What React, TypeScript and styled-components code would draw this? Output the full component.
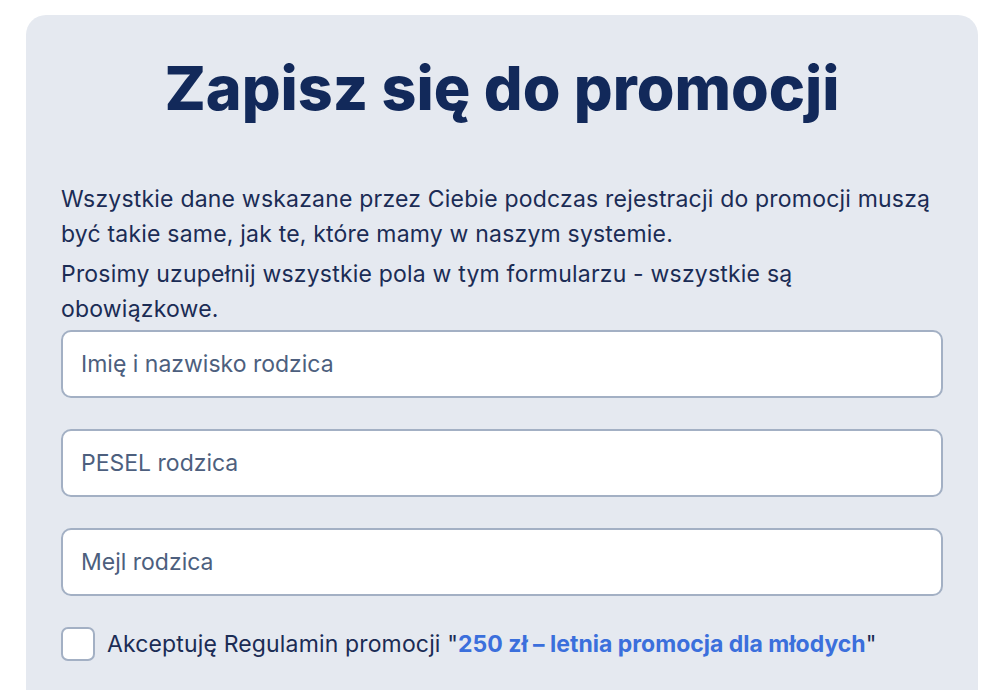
import React, { FC, useState } from 'react';
import styled, { createGlobalStyle } from 'styled-components';

const GlobalStyle = createGlobalStyle`
  html, body {
    margin: 0;
    padding: 0;
    background: #ffffff;
  }
  body {
    font-family: Inter, "Noto Sans", "Liberation Sans", sans-serif;
  }
`;

const Page = styled.div`
  padding: 15px 18px 0 26px;
`;

const Card = styled.div`
  background-color: #e5e9f0;
  border-radius: 20px;
  padding: 37px 35px 40px 35px;
  min-height: 720px;
  box-sizing: border-box;
`;

const Title = styled.h1`
  margin: 0 0 58px 0;
  text-align: center;
  font-size: 61px;
  line-height: 72px;
  font-weight: 800;
  color: #12295a;
`;

const Lead = styled.p`
  margin: 0 0 5px 0;
  font-size: 23px;
  line-height: 35px;
  letter-spacing: 0.2px;
  color: #1b2c55;
`;

const Fields = styled.div`
  display: flex;
  flex-direction: column;
  gap: 31px;
  margin-top: -2px;
`;

const Input = styled.input`
  box-sizing: border-box;
  width: 100%;
  height: 68px;
  border: 2px solid #a3b0c4;
  border-radius: 10px;
  background: #ffffff;
  padding: 0 18px;
  font-family: inherit;
  font-size: 23px;
  color: #1b2c55;
  outline: none;

  &::placeholder {
    color: #4d5f7e;
  }
`;

const ConsentRow = styled.label`
  display: flex;
  align-items: center;
  gap: 12px;
  margin-top: 31px;
  font-size: 23px;
  letter-spacing: 0.15px;
  color: #1b2c55;
  cursor: pointer;
`;

const Box = styled.span<{ checked: boolean }>`
  flex: none;
  width: 34px;
  height: 34px;
  box-sizing: border-box;
  border: 2px solid #a3b0c4;
  border-radius: 7px;
  background: ${(p) => (p.checked ? '#3b6fdc' : '#ffffff')};
  display: flex;
  align-items: center;
  justify-content: center;
`;

const HiddenCheck = styled.input`
  display: none;
`;

const RulesLink = styled.a`
  color: #3b6fdc;
  font-weight: 700;
  letter-spacing: 0;
  text-decoration: none;
`;

const App: FC = () => {
  const [accepted, setAccepted] = useState(false);

  return (
    <Page>
      <GlobalStyle />
      <Card>
        <Title>Zapisz się do promocji</Title>
        <Lead>
          Wszystkie dane wskazane przez Ciebie podczas rejestracji do promocji muszą
          być takie same, jak te, które mamy w naszym systemie.
        </Lead>
        <Lead>
          Prosimy uzupełnij wszystkie pola w tym formularzu - wszystkie są obowiązkowe.
        </Lead>
        <Fields>
          <Input type="text" placeholder="Imię i nazwisko rodzica" />
          <Input type="text" placeholder="PESEL rodzica" />
          <Input type="email" placeholder="Mejl rodzica" />
        </Fields>
        <ConsentRow>
          <HiddenCheck
            type="checkbox"
            checked={accepted}
            onChange={() => setAccepted((prev) => !prev)}
          />
          <Box checked={accepted}>
            {accepted && (
              <svg width="18" height="18" viewBox="0 0 24 24" fill="none" stroke="#fff" strokeWidth="3">
                <polyline points="5 12 10 17 19 7" />
              </svg>
            )}
          </Box>
          <span>
            Akceptuję Regulamin promocji "
            <RulesLink href="#">250 zł – letnia promocja dla młodych</RulesLink>"
          </span>
        </ConsentRow>
      </Card>
    </Page>
  );
};

export default App;
